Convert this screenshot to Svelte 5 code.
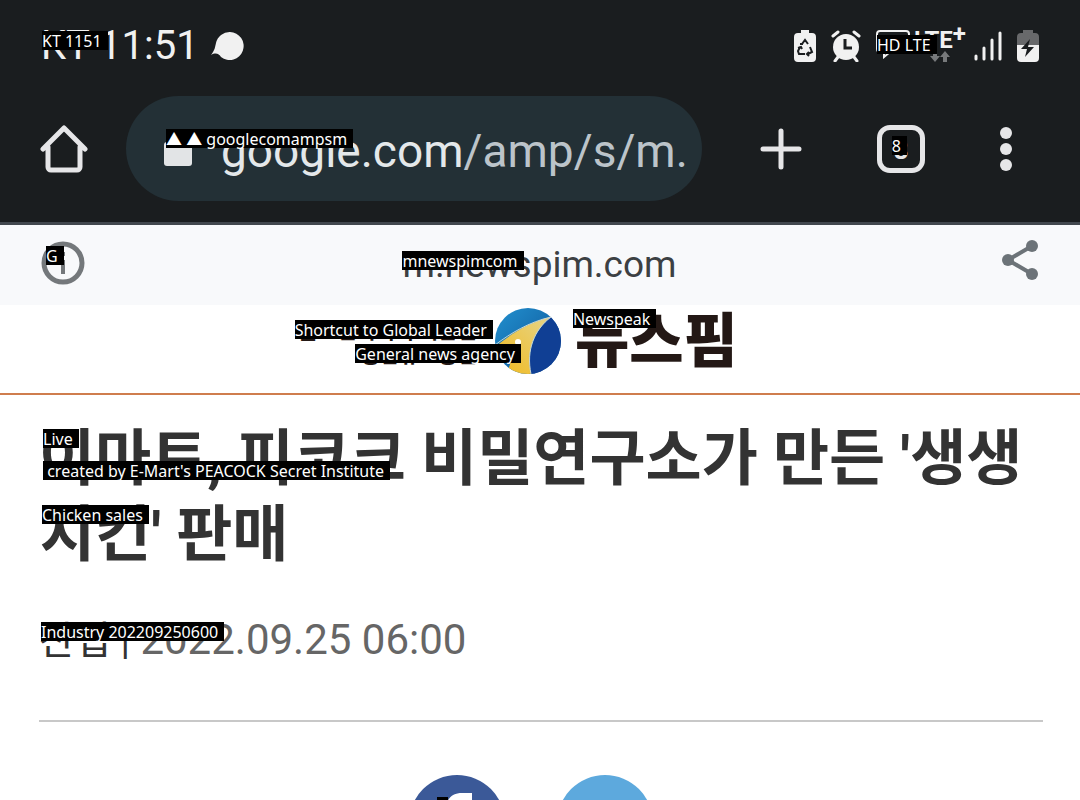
<script lang="ts">
  let url = $state('google.com/amp/s/m.');
  let tabCount = $state(8);

  const [domain, path] = ['google.com', '/amp/s/m.'];
</script>

{#snippet caption(text: string, place: string)}
  <span class="caption {place}">{text}</span>
{/snippet}

<div class="screen">
  <header class="chrome">
    <div class="status">
      <div class="status-left">
        <span class="clock">KT 11:51</span>
        {@render caption('KT 1151', 'on-clock')}
        <svg width="34" height="30" viewBox="0 0 34 30" aria-hidden="true">
          <path d="M19 1a14 14 0 1 1-9 25C8 23 5 21 0 24C4 19 4 16 5 12A14 14 0 0 1 19 1z" fill="#f1f1f1" />
        </svg>
      </div>
      <div class="status-right">
        <svg width="22" height="32" viewBox="0 0 22 32" aria-hidden="true">
          <path d="M7 0h8v3h3a4 4 0 0 1 4 4v21a4 4 0 0 1-4 4H4a4 4 0 0 1-4-4V7a4 4 0 0 1 4-4h3z" fill="#f1f1f1" />
          <path d="M8 14l3-4 3 4M16 17l2 5-4 2M11 24H5l-1-3 2-4M6 14h3M15 22l-2 2 2 2M4 18l3-1 1 2" fill="none" stroke="#1a1d1f" stroke-width="2" />
        </svg>
        <svg width="30" height="32" viewBox="0 0 30 32" aria-hidden="true">
          <circle cx="15" cy="17" r="13" fill="#f1f1f1" />
          <path d="M2 6l5-4M28 6l-5-4M7 27l-3 4M23 27l3 4" stroke="#f1f1f1" stroke-width="3" stroke-linecap="round" />
          <path d="M14 9v9h7" fill="none" stroke="#1a1d1f" stroke-width="3" />
        </svg>
        <div class="network">
          <svg width="34" height="30" viewBox="0 0 34 30" aria-hidden="true">
            <path d="M4 2h26a3 3 0 0 1 3 3v15a3 3 0 0 1-3 3H14l-6 5v-5H4a3 3 0 0 1-3-3V5a3 3 0 0 1 3-3z" fill="none" stroke="#f1f1f1" stroke-width="2" />
          </svg>
          <div class="lte">
            <span class="lte-text">LTE<sup>+</sup></span>
            <svg width="20" height="12" viewBox="0 0 20 12" aria-hidden="true">
              <path d="M3 0h4v5h3l-5 6-5-6h3zM13 11h4V6h3l-5-6-5 6h3z" fill="#77797b" />
            </svg>
          </div>
          {@render caption('HD LTE', 'on-network')}
        </div>
        <svg width="28" height="30" viewBox="0 0 28 30" aria-hidden="true">
          <path d="M2 25v3M10 17v11M18 9v19M26 2v26" stroke="#f1f1f1" stroke-width="3" stroke-linecap="round" />
        </svg>
        <svg width="22" height="32" viewBox="0 0 22 32" aria-hidden="true">
          <path d="M6 0h10v3h2a4 4 0 0 1 4 4v8H0V7a4 4 0 0 1 4-4h2z" fill="#68696b" />
          <path d="M0 15h22v13a4 4 0 0 1-4 4H4a4 4 0 0 1-4-4z" fill="#f1f1f1" />
          <path d="M13 9L4 19h6l-2 8 9-10h-6z" fill="#1a1d1f" />
        </svg>
      </div>
    </div>

    <div class="toolbar">
      <button type="button" aria-label="Home">
        <svg width="48" height="48" viewBox="0 0 48 48" aria-hidden="true">
          <path d="M8 22v20a3 3 0 0 0 3 3h26a3 3 0 0 0 3-3V22M3 24L24 3l21 21" fill="none" stroke="#e6e6e8" stroke-width="5" stroke-linecap="round" stroke-linejoin="round" />
        </svg>
      </button>
      <button type="button" class="address" aria-label={url}>
        <svg width="28" height="36" viewBox="0 0 28 36" aria-hidden="true">
          <path d="M7 12V9a7 7 0 0 1 14 0v3" fill="none" stroke="#e2e4e6" stroke-width="4" />
          <rect y="11" width="28" height="24" rx="3" fill="#e2e4e6" />
        </svg>
        <span class="url">{domain}<span class="path">{path}</span></span>
        {@render caption('▲ ▲ googlecomampsm', 'on-address')}
      </button>
      <div class="actions">
        <button type="button" aria-label="New tab">
          <svg width="42" height="42" viewBox="0 0 42 42" aria-hidden="true">
            <path d="M21 3v36M3 21h36" stroke="#e6e6e8" stroke-width="5" stroke-linecap="round" />
          </svg>
        </button>
        <button type="button" class="tabs">
          {tabCount}
          {@render caption('8', 'on-tabs')}
        </button>
        <button type="button" aria-label="Menu">
          <svg width="12" height="44" viewBox="0 0 12 44" aria-hidden="true">
            <g fill="#e6e6e8">
              <circle cx="6" cy="6" r="6" />
              <circle cx="6" cy="22" r="6" />
              <circle cx="6" cy="38" r="6" />
            </g>
          </svg>
        </button>
      </div>
    </div>
  </header>

  <div class="amp-bar">
    <button type="button" class="info" aria-label="Info">
      <svg width="44" height="44" viewBox="0 0 44 44" aria-hidden="true">
        <circle cx="22" cy="22" r="19" fill="none" stroke="#74787b" stroke-width="5" />
        <path d="M22 11v4M22 19v14" stroke="#74787b" stroke-width="4" />
      </svg>
      {@render caption('G', 'on-info')}
    </button>
    <span class="host">
      m.newspim.com
      {@render caption('mnewspimcom', 'on-host')}
    </span>
    <button type="button" class="share" aria-label="Share">
      <svg width="36" height="40" viewBox="0 0 36 40" aria-hidden="true">
        <path d="M30 6L6 20l24 14" fill="none" stroke="#6c7378" stroke-width="4" />
        <g fill="#6c7378">
          <circle cx="30" cy="6" r="6" />
          <circle cx="6" cy="20" r="6" />
          <circle cx="30" cy="34" r="6" />
        </g>
      </svg>
    </button>
  </div>

  <div class="brand">
    <a href="#home">
      <span class="slogan">
        <span>글로벌리더의 지름길</span>
        <span>종합뉴스통신</span>
        {@render caption('Shortcut to Global Leader', 'on-slogan')}
        {@render caption('General news agency', 'on-agency')}
      </span>
      <svg width="66" height="66" viewBox="0 0 66 66" aria-hidden="true">
        <defs>
          <linearGradient id="sky" x1="0" y1="0" x2="1" y2="1">
            <stop offset="0" stop-color="#2291cf" />
            <stop offset="1" stop-color="#0b4c91" />
          </linearGradient>
          <linearGradient id="road" x1="0" y1="1" x2="1" y2="0">
            <stop offset="0" stop-color="#f2b91c" />
            <stop offset="1" stop-color="#e6d58a" />
          </linearGradient>
          <clipPath id="globe"><circle cx="33" cy="33" r="33" /></clipPath>
        </defs>
        <g clip-path="url(#globe)">
          <rect width="66" height="66" fill="url(#sky)" />
          <path d="M56 8C42 20 33 38 34 66h32V8z" fill="#103f94" />
          <path d="M0 39C16 26 34 14 56 9C39 22 31 42 36 66H12l8-26-20 14z" fill="url(#road)" />
          <path d="M0 37C16 25 34 14 56 9C39 22 31 42 36 66" fill="none" stroke="#c9d6d4" stroke-width="1" />
          <circle cx="23" cy="34" r="3" fill="#fff" />
        </g>
      </svg>
      <span class="wordmark">
        뉴스핌
        {@render caption('Newspeak', 'on-wordmark')}
      </span>
    </a>
  </div>

  <article>
    <h1>
      이마트, 피코크 비밀연구소가 만든 '생생치킨' 판매
      {@render caption('Live', 'on-title-1')}
      {@render caption(" created by E-Mart's PEACOCK Secret Institute", 'on-title-2')}
      {@render caption('Chicken sales', 'on-title-3')}
    </h1>
    <p class="meta">
      <span class="section">산업 |</span> <time datetime="2022-09-25T06:00">2022.09.25 06:00</time>
      {@render caption('Industry 202209250600', 'on-meta')}
    </p>
    <div class="social">
      <a href="#facebook" class="facebook" aria-label="Facebook">
        <svg width="96" height="96" viewBox="0 0 96 96" aria-hidden="true">
          <circle cx="48" cy="48" r="48" fill="#3b5998" />
          <path d="M63 18v13h-8c-4 0-5 2-5 6v7h13l-2 13H50v32H37V57H27V44h10V34c0-10 6-16 16-16z" fill="#fff" />
        </svg>
        <span class="mark"></span>
      </a>
      <a href="#twitter" aria-label="Twitter">
        <svg width="96" height="96" viewBox="0 0 96 96" aria-hidden="true">
          <circle cx="48" cy="48" r="48" fill="#5da9dd" />
          <path d="M74 35c-2 1-4 1-6 2 2-1 4-3 5-6l-7 3c-8-8-20-1-17 9-9 0-17-4-22-11-3 5-1 11 3 14l-5-1c0 5 3 9 8 10l-5 1c2 4 5 7 10 7-4 4-10 5-16 4 21 13 46 0 46-26 2-2 5-4 6-6z" fill="#fff" />
        </svg>
      </a>
    </div>
  </article>
</div>

<style>
  :global(body) {
    background: #fff;
  }

  .screen {
    height: 100vh;
    overflow: hidden;
    background: #fff;
    font-family: Roboto, "Noto Sans CJK KR", sans-serif;
  }

  button {
    position: relative;
    display: flex;
    align-items: center;
    padding: 0;
    border: 0;
    background: none;
    color: inherit;
    font: inherit;
    cursor: pointer;
  }

  svg {
    display: block;
    flex: none;
  }

  .chrome {
    border-bottom: 3px solid #42474e;
    background: #1a1d1f;
    color: #f1f1f1;
  }

  .status {
    display: flex;
    align-items: center;
    justify-content: space-between;
    height: 92px;
    padding: 0 41px;
  }

  .status-left,
  .status-right {
    position: relative;
    display: flex;
    align-items: center;
    gap: 15px;
  }

  .status-left {
    gap: 12px;
  }

  .clock {
    font-size: 40px;
    line-height: 48px;
  }

  .network {
    position: relative;
    display: flex;
    gap: 4px;
    margin-right: -7px;
  }

  .lte {
    display: flex;
    flex-direction: column;
    align-items: center;
    width: 52px;
  }

  .lte-text {
    font-size: 24px;
    font-weight: 700;
    line-height: 22px;
  }

  .lte-text sup {
    font-size: 24px;
    line-height: 0;
    vertical-align: 6px;
  }

  .toolbar {
    display: flex;
    align-items: center;
    gap: 38px;
    padding: 4px 72px 21px 40px;
  }

  .address {
    flex: 1;
    gap: 29px;
    height: 105px;
    padding: 0 14px 0 38px;
    border-radius: 53px;
    background: #233036;
    color: #e4e8ea;
  }

  .url {
    flex: 1;
    overflow: hidden;
    padding-top: 4px;
    font-size: 46px;
    line-height: 60px;
    text-align: left;
    white-space: nowrap;
  }

  .path {
    color: #bcc4ca;
  }

  .actions {
    display: flex;
    align-items: center;
    gap: 75px;
    padding-left: 20px;
  }

  .tabs {
    justify-content: center;
    box-sizing: border-box;
    width: 48px;
    height: 48px;
    padding-top: 2px;
    border: 5px solid #e6e6e8;
    border-radius: 13px;
    color: #e6e6e8;
    font-size: 26px;
    font-weight: 700;
  }

  .amp-bar {
    display: grid;
    grid-template-columns: 1fr auto 1fr;
    align-items: center;
    height: 80px;
    padding: 0 42px 0 41px;
    background: #f8f9fb;
  }

  .info {
    justify-self: start;
    padding-bottom: 4px;
  }

  .host {
    position: relative;
    color: #3c4043;
    font-size: 37px;
    line-height: 48px;
  }

  .share {
    justify-self: end;
    padding-bottom: 10px;
  }

  .brand {
    display: flex;
    justify-content: center;
    padding-right: 44px;
    height: 88px;
    border-bottom: 2px solid #cf7d4e;
  }

  .brand a {
    display: flex;
    align-items: flex-start;
    gap: 14px;
    padding-top: 3px;
    color: #231815;
    font-family: "Noto Sans CJK KR", sans-serif;
    font-weight: 700;
    text-decoration: none;
  }

  .slogan {
    position: relative;
    display: flex;
    flex-direction: column;
    align-items: flex-end;
    padding: 9px 4px 0 0;
    font-size: 21px;
    line-height: 24px;
  }

  .wordmark {
    position: relative;
    font-size: 59px;
    font-weight: 900;
    line-height: 58px;
  }

  article {
    padding: 26px 37px 0 39px;
  }

  h1 {
    position: relative;
    margin: 0;
    color: #333;
    font-size: 61px;
    font-weight: 700;
    line-height: 76px;
    word-break: break-all;
  }

  .meta {
    position: relative;
    margin: 0;
    padding: 42px 0 54px;
    border-bottom: 2px solid #c8c8c8;
    color: #666;
    font-size: 42px;
    line-height: 50px;
  }

  .section {
    color: #333;
    font-size: 39px;
  }

  .social {
    display: flex;
    justify-content: center;
    gap: 52px;
    padding: 53px 20px 0 0;
  }

  .facebook {
    position: relative;
  }

  .mark {
    position: absolute;
    top: 22px;
    left: 28px;
    width: 11px;
    height: 18px;
    background: #000;
  }

  /* translated captions lie over the original text */
  .caption {
    position: absolute;
    padding: 1px 6px 0 0;
    background: #000;
    color: #fff;
    font-family: "Noto Sans", "Noto Sans CJK KR", sans-serif;
    font-size: 16px;
    font-weight: 400;
    line-height: 18px;
    text-align: left;
    white-space: pre;
  }

  .on-clock {
    top: 9px;
    left: 1px;
  }

  .on-network {
    top: 6px;
    left: 1px;
  }

  .on-address {
    top: 33px;
    left: 40px;
  }

  .on-tabs {
    top: 6px;
    left: 10px;
  }

  .on-info {
    top: 5px;
    left: 5px;
  }

  .on-host {
    top: 10px;
    left: 0;
  }

  .on-slogan {
    top: 12px;
    right: -12px;
  }

  .on-agency {
    top: 36px;
    right: -40px;
  }

  .on-wordmark {
    top: 1px;
    left: -2px;
  }

  .on-title-1 {
    top: 8px;
    left: 4px;
  }

  .on-title-2 {
    top: 40px;
    left: 4px;
  }

  .on-title-3 {
    top: 84px;
    left: 3px;
  }

  .on-meta {
    top: 49px;
    left: 2px;
  }
</style>
